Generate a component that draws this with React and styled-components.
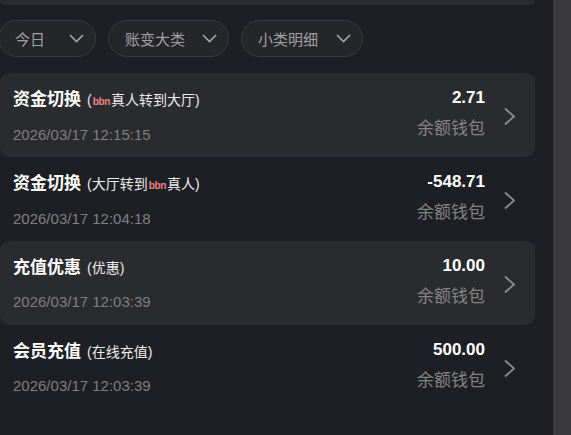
import React from 'react'
import styled, { createGlobalStyle } from 'styled-components'

const GlobalStyle = createGlobalStyle`
   html, body {
      margin: 0;
      padding: 0;
      background: #1e1f24;
      font-family: 'Liberation Sans', 'Noto Sans CJK SC', sans-serif;
   }
`

const filters = [
   { label: '今日', width: 98 },
   { label: '账变大类', width: 121 },
   { label: '小类明细', width: 122 },
]

const records = [
   {
      id: 1,
      title: '资金切换',
      sub: [{ t: '(' }, { logo: true }, { t: '真人转到大厅)' }],
      date: '2026/03/17 12:15:15',
      amount: '2.71',
      highlight: true,
   },
   {
      id: 2,
      title: '资金切换',
      sub: [{ t: '(大厅转到' }, { logo: true }, { t: '真人)' }],
      date: '2026/03/17 12:04:18',
      amount: '-548.71',
   },
   {
      id: 3,
      title: '充值优惠',
      sub: [{ t: '(优惠)' }],
      date: '2026/03/17 12:03:39',
      amount: '10.00',
      highlight: true,
   },
   {
      id: 4,
      title: '会员充值',
      sub: [{ t: '(在线充值)' }],
      date: '2026/03/17 12:03:39',
      amount: '500.00',
   },
]

const ChevronDown = () => (
   <svg width="15" height="9" viewBox="0 0 15 9" fill="none">
      <path d="M1 1l6.5 6.5L14 1" stroke="#a6a6a8" strokeWidth="1.6" />
   </svg>
)

const ChevronRight = () => (
   <svg width="14" height="19" viewBox="0 0 14 19" fill="none">
      <path d="M2 1.5l9 8-9 8" stroke="#8d8d8f" strokeWidth="1.8" />
   </svg>
)

const App = () => {
   return (
      <Page>
         <GlobalStyle />
         <Main>
            <TopCard />
            <FilterRow>
               {filters.map((f) => (
                  <Pill key={f.label} $width={f.width}>
                     <span>{f.label}</span>
                     <ChevronDown />
                  </Pill>
               ))}
            </FilterRow>
            <List>
               {records.map((r) => (
                  <Row key={r.id} $highlight={r.highlight}>
                     <Left>
                        <TitleLine>
                           <Title>{r.title}</Title>
                           <Sub>
                              {r.sub.map((s, i) =>
                                 s.logo ? (
                                    <Logo key={i}>bbn</Logo>
                                 ) : (
                                    <React.Fragment key={i}>{s.t}</React.Fragment>
                                 )
                              )}
                           </Sub>
                        </TitleLine>
                        <DateText>{r.date}</DateText>
                     </Left>
                     <Right>
                        <Amount>{r.amount}</Amount>
                        <Wallet>余额钱包</Wallet>
                     </Right>
                     <Arrow>
                        <ChevronRight />
                     </Arrow>
                  </Row>
               ))}
            </List>
         </Main>
         <ScrollTrack />
      </Page>
   )
}

export default App

const Page = styled.div`
   display: flex;
   width: 571px;
   height: 435px;
   overflow: hidden;
   background: #1e1f24;
`
const Main = styled.div`
   width: 535px;
   display: flex;
   flex-direction: column;
`
const ScrollTrack = styled.div`
   margin-left: auto;
   width: 18px;
   height: 100%;
   background: #3a3a3c;
`
const TopCard = styled.div`
   height: 5px;
   background: #2a2b2e;
   border-radius: 0 0 8px 8px;
`
const FilterRow = styled.div`
   display: flex;
   gap: 12px;
   margin: 15px 0 16px -2px;
`
const Pill = styled.div`
   width: ${(p) => p.$width}px;
   height: 37px;
   box-sizing: border-box;
   display: flex;
   align-items: center;
   justify-content: space-between;
   padding: 0 11px 0 16px;
   border: 1px solid #3a3b3f;
   border-radius: 19px;
   background: #25262a;
   color: #a0a0a2;
   font-size: 15px;
`
const List = styled.div`
   display: flex;
   flex-direction: column;
`
const Row = styled.div`
   height: 84px;
   box-sizing: border-box;
   display: flex;
   align-items: stretch;
   padding: 0 18px 0 13px;
   border-radius: 9px;
   background: ${(p) => (p.$highlight ? '#2a2b2e' : 'transparent')};
`
const Left = styled.div`
   flex: 1;
   display: flex;
   flex-direction: column;
   padding-top: 16px;
   gap: 13px;
`
const TitleLine = styled.div`
   display: flex;
   align-items: baseline;
   gap: 6px;
   line-height: 21px;
`
const Title = styled.span`
   font-size: 17px;
   font-weight: 700;
   color: #ffffff;
`
const Sub = styled.span`
   font-size: 14px;
   color: #ececec;
`
const Logo = styled.span`
   display: inline-block;
   font-size: 10px;
   font-weight: 700;
   color: #ec8286;
   letter-spacing: -0.3px;
   margin: 0 1px;
`
const DateText = styled.div`
   font-size: 15px;
   line-height: 20px;
   color: #7f7f81;
`
const Right = styled.div`
   display: flex;
   flex-direction: column;
   align-items: flex-end;
   padding-top: 15px;
   gap: 10px;
`
const Amount = styled.div`
   font-size: 17px;
   font-weight: 700;
   line-height: 20px;
   color: #ffffff;
`
const Wallet = styled.div`
   font-size: 17px;
   line-height: 22px;
   color: #838385;
`
const Arrow = styled.div`
   display: flex;
   align-items: center;
   margin-left: 18px;
   padding-top: 2px;
`
